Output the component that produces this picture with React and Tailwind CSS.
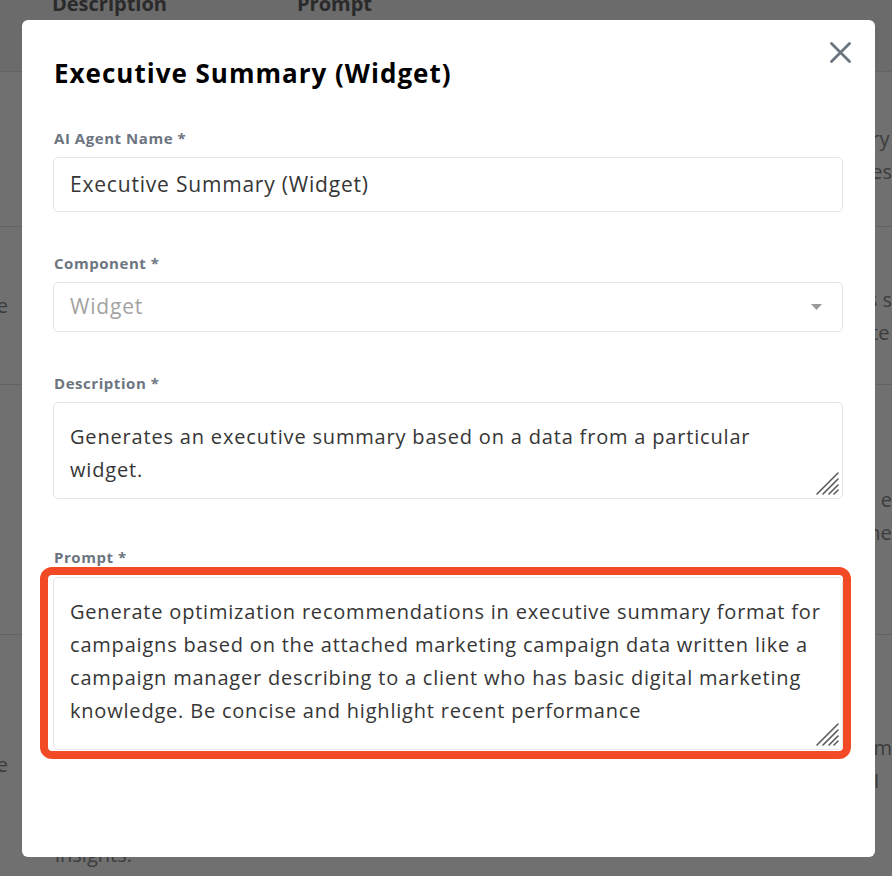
import React from 'react';

const font = { fontFamily: '"Open Sans", "Noto Sans", sans-serif' };

const rows = [
  { h: 'h-[155px]', pt: 'pt-[50px]', left: '', right: ['mary', 'Rules'] },
  { h: 'h-[158px]', pt: 'pt-[56px]', left: 'Active', right: ['this s', 'state'] },
  { h: 'h-[250px]', pt: 'pt-[98px]', left: '', right: ['and e', 'plane'] },
  { h: 'h-[260px]', pt: 'pt-[96px]', left: 'Active', right: ['comm', 'ed - I'] },
];

const ResizeHandle = () => (
  <svg
    className="absolute right-[3px] bottom-[3px] pointer-events-none"
    width="24"
    height="24"
    viewBox="0 0 24 24"
  >
    <g stroke="#5a5a5a" strokeWidth="1.6" strokeLinecap="round">
      <line x1="2" y1="23" x2="23" y2="2" />
      <line x1="8" y1="23" x2="23" y2="8" />
      <line x1="14" y1="23" x2="23" y2="14" />
      <line x1="19" y1="23" x2="23" y2="19" />
    </g>
  </svg>
);

const Label = ({ children, className = '' }) => (
  <label className={`block text-[15px] leading-[20px] font-bold tracking-[0.55px] text-[#6c7580] ${className}`}>
    {children}
  </label>
);

export default function App() {
  return (
    <div className="relative w-[892px] h-[876px] overflow-hidden bg-white" style={font}>
      {/* page behind the modal */}
      <div className="flex flex-col">
        <div className="h-[72px] bg-[#f4f4f4] border-b border-[#e2e2e2] flex">
          <div className="w-[52px]" />
          <div className="w-[245px] -mt-[6px] text-[20px] leading-[20px] font-bold text-[#606060]">Description</div>
          <div className="-mt-[6px] text-[20px] leading-[20px] font-bold text-[#606060]">Prompt</div>
        </div>
        {rows.map((r, i) => (
          <div key={i} className={`${r.h} flex border-b border-[#e2e2e2] relative`}>
            <div className="w-[8px] flex items-center justify-end">
              <span className="whitespace-nowrap text-[20px] text-[#8a8a8a]">{r.left}</span>
            </div>
            <div className="w-[842px]" />
            <div className={`${r.pt} text-[20px] leading-[33px] text-[#8a8a8a] whitespace-nowrap`}>
              {r.right.map((t) => (
                <div key={t}>{t}</div>
              ))}
            </div>
            {i === 3 && (
              <div className="absolute left-[55px] top-[205px] text-[20px] leading-[30px] text-[#8a8a8a]">insights.</div>
            )}
          </div>
        ))}
      </div>

      {/* backdrop */}
      <div className="absolute inset-0 bg-black/[0.56]" />

      {/* modal */}
      <div className="absolute left-[22px] top-[20px] w-[853px] h-[837px] bg-white rounded-[6px] pt-[37px] pl-[31px] pr-[32px]">
        <button className="absolute top-[22px] right-[24px] w-[21px] h-[21px]">
          <svg width="21" height="21" viewBox="0 0 21 21">
            <g stroke="#6b7580" strokeWidth="2.8" strokeLinecap="round">
              <line x1="1.5" y1="1.5" x2="19.5" y2="19.5" />
              <line x1="19.5" y1="1.5" x2="1.5" y2="19.5" />
            </g>
          </svg>
        </button>

        <h2 className="pl-[1px] text-[26px] leading-[32px] font-bold tracking-[1px] text-black">Executive Summary (Widget)</h2>

        <Label className="mt-[39px] pl-[1px]">AI Agent Name *</Label>
        <div className="mt-[9px] h-[55px] border border-[#e5e5e5] rounded-[5px] flex items-center px-[16px] text-[21px] tracking-[0.8px] text-[#363636]">
          Executive Summary (Widget)
        </div>

        <Label className="mt-[41px] pl-[1px]">Component *</Label>
        <div className="mt-[9px] h-[50px] border border-[#e5e5e5] rounded-[5px] flex items-center justify-between pl-[16px] pr-[20px] text-[21px] tracking-[0.8px] text-[#a3a3a3]">
          <span>Widget</span>
          <svg width="11" height="6" viewBox="0 0 11 6">
            <path d="M0 0 H11 L5.5 6 Z" fill="#9a9a9a" />
          </svg>
        </div>

        <Label className="mt-[41px] pl-[1px]">Description *</Label>
        <div className="relative mt-[9px] h-[97px] border border-[#e5e5e5] rounded-[5px] pl-[16px] pr-[24px] pt-[17px] text-[20px] leading-[33px] tracking-[0.82px] text-[#363636]">
          Generates an executive summary based on a data from a particular widget.
          <ResizeHandle />
        </div>

        <Label className="mt-[48px] pl-[1px]">Prompt *</Label>
        <div className="relative mt-[10px] h-[173px] border border-[#e5e5e5] rounded-[5px] pl-[16px] pr-[10px] pt-[17px] text-[20px] leading-[33px] tracking-[0.8px] text-[#363636]">
          Generate optimization recommendations in executive summary format for campaigns based on the attached marketing campaign data written like a campaign manager describing to a client who has basic digital marketing knowledge. Be concise and highlight recent performance
          <ResizeHandle />
          <div className="absolute -left-[14px] -right-[9px] -top-[11px] -bottom-[10px] border-[8px] border-[#f34a26] rounded-[12px] pointer-events-none" />
        </div>
      </div>
    </div>
  );
}
